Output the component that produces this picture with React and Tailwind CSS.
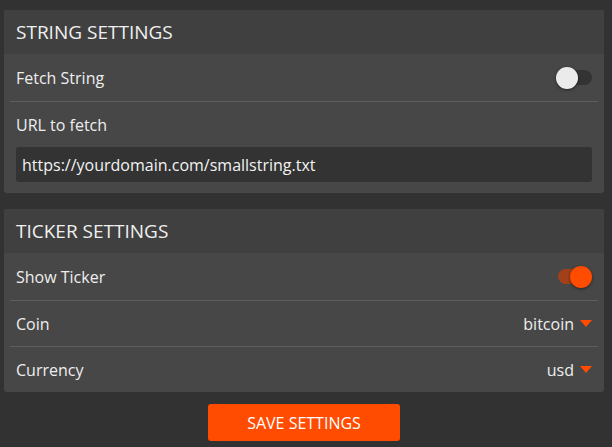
import React from "react";

const font = { fontFamily: '"Open Sans", "Noto Sans", sans-serif' };

function Toggle({ on }) {
  return (
    <div className="relative w-[36px] h-[22px] flex items-center">
      <div
        className={
          "absolute left-[2px] w-[34px] h-[15px] rounded-full " +
          (on ? "bg-[#a2401a]" : "bg-[#333333]")
        }
      />
      <div
        className={
          "absolute top-0 w-[22px] h-[22px] rounded-full shadow-[0_1px_3px_rgba(0,0,0,0.5)] " +
          (on ? "left-[14px] bg-[#ff4c00]" : "left-0 bg-[#ebebeb]")
        }
      />
    </div>
  );
}

function Caret() {
  return (
    <svg width="12" height="7" viewBox="0 0 12 7" className="ml-[6px]">
      <polygon points="0,0 12,0 6,7" fill="#ff4c00" />
    </svg>
  );
}

function Row({ label, right, divider = true, first = false }) {
  return (
    <div className="mx-[6px]">
      <div
        className={
          "flex items-center justify-between pl-[6px] pr-[6px] " +
          (first ? "h-[47px]" : "h-[45px]")
        }
      >
        <span className="text-[16px] text-[#eeeeee]">{label}</span>
        {right}
      </div>
      {divider && <div className="h-px bg-[#5e5e5e]" />}
    </div>
  );
}

function Card({ title, children }) {
  return (
    <div className="rounded-[3px] bg-[#474747] overflow-hidden">
      <div className="h-[44px] bg-[#404040] flex items-center px-[12px]">
        <span className="text-[19px] text-[#f0f0f0]">{title}</span>
      </div>
      {children}
    </div>
  );
}

export default function App() {
  return (
    <div
      className="w-[612px] h-[447px] bg-[#323232] pl-[4px] pr-[8px] pt-[10px] flex flex-col"
      style={font}
    >
      <Card title="STRING SETTINGS">
        <Row first label="Fetch String" right={<Toggle on={false} />} />
        <div className="px-[12px] pb-[11px]">
          <div className="h-[45px] flex items-center">
            <span className="text-[16px] text-[#eeeeee]">URL to fetch</span>
          </div>
          <div className="h-[35px] rounded-[3px] bg-[#333333] flex items-center px-[6px] text-[16px] text-[#f2f2f2]">
            https://yourdomain.com/smallstring.txt
          </div>
        </div>
      </Card>
      <div className="h-[16px]" />
      <Card title="TICKER SETTINGS">
        <Row first label="Show Ticker" right={<Toggle on={true} />} />
        <Row
          label="Coin"
          right={
            <div className="flex items-center text-[16px] text-[#eeeeee]">
              bitcoin
              <Caret />
            </div>
          }
        />
        <Row
          label="Currency"
          divider={false}
          right={
            <div className="flex items-center text-[16px] text-[#eeeeee]">
              usd
              <Caret />
            </div>
          }
        />
      </Card>
      <div className="flex justify-center pt-[12px]">
        <button className="w-[192px] h-[37px] rounded-[3px] bg-[#ff4c00] text-white text-[16px]">
          SAVE SETTINGS
        </button>
      </div>
    </div>
  );
}
